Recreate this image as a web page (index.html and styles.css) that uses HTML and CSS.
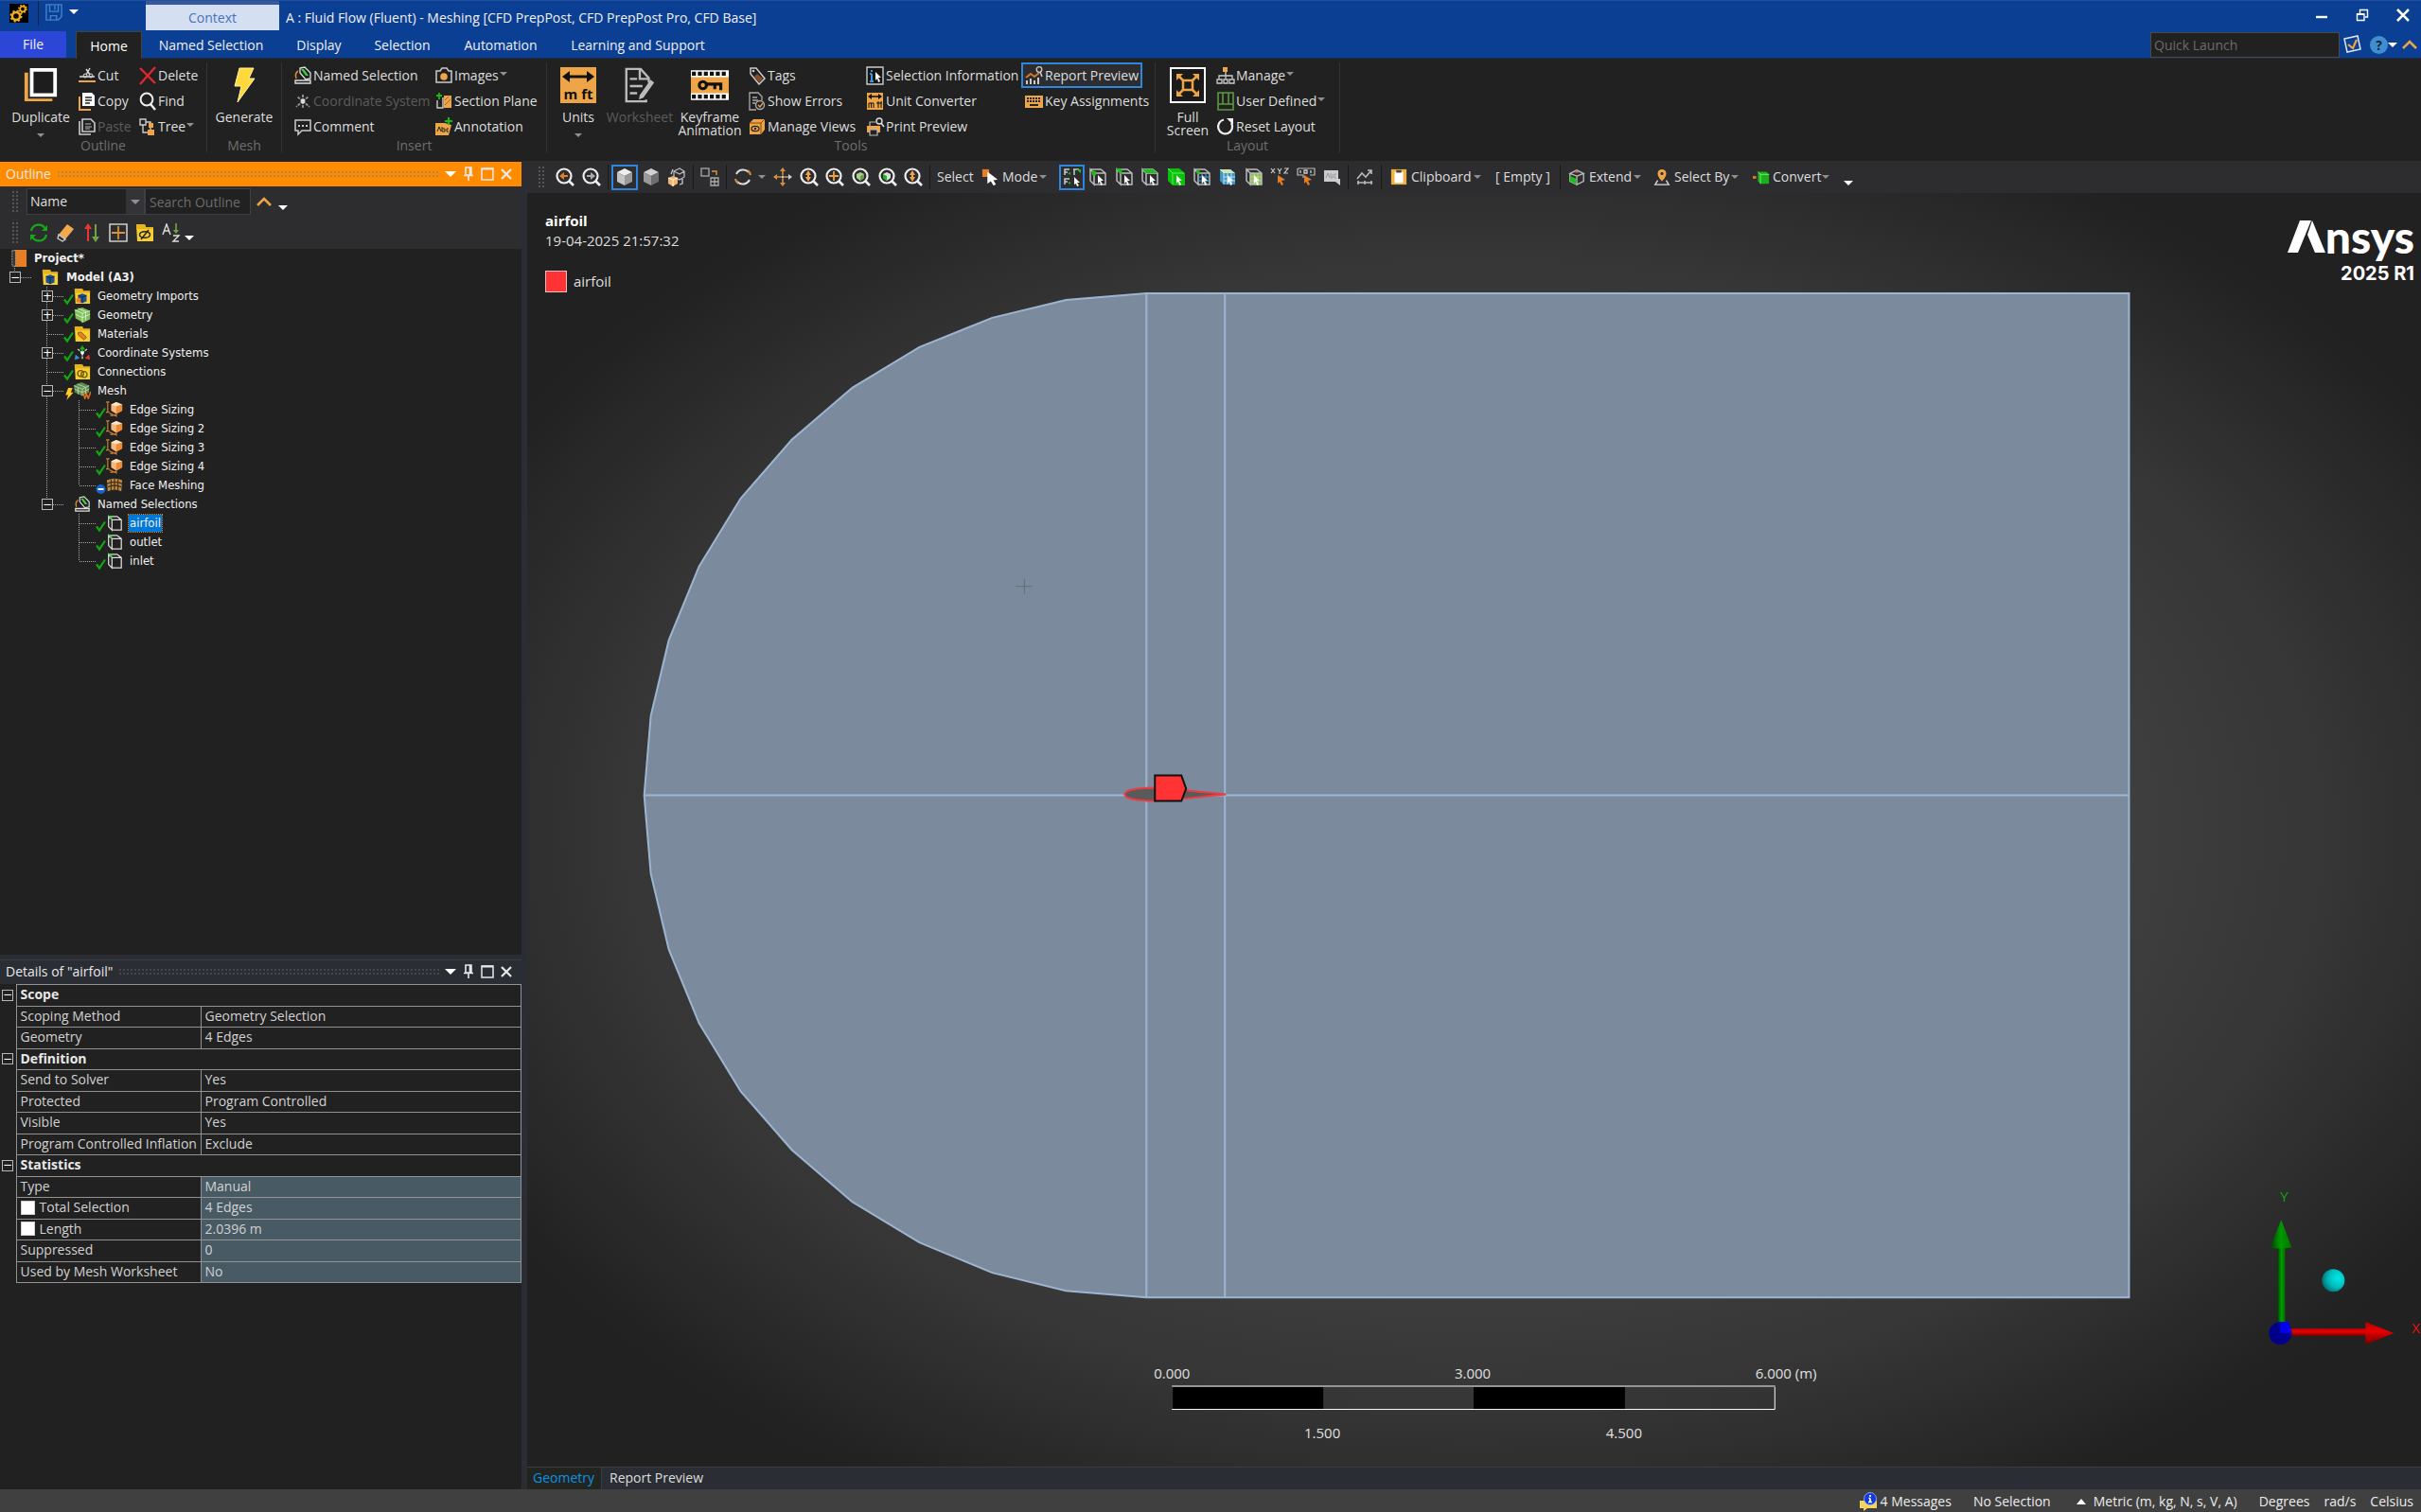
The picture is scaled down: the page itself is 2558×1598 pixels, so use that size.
FILE: index.html
```html
<!DOCTYPE html>
<html lang="en">
<head>
<meta charset="utf-8">
<title>A : Fluid Flow (Fluent) - Meshing</title>
<link rel="stylesheet" href="styles.css">
</head>
<body>
<svg class="sprite" aria-hidden="true">
  <defs>
    <linearGradient id="gTop" x1="0" y1="0" x2="1" y2="0"><stop offset="0" stop-color="#013d01"/><stop offset=".5" stop-color="#009a00"/><stop offset="1" stop-color="#007200"/></linearGradient>
    <linearGradient id="gRed" x1="0" y1="0" x2="0" y2="1"><stop offset="0" stop-color="#b00000"/><stop offset=".4" stop-color="#e80000"/><stop offset="1" stop-color="#700000"/></linearGradient>
    <radialGradient id="gCyan" cx=".7" cy=".4" r=".8"><stop offset="0" stop-color="#00e8e8"/><stop offset=".5" stop-color="#00bcbc"/><stop offset="1" stop-color="#005c5c"/></radialGradient>
  </defs>
  <symbol id="gears" viewBox="0 0 20 20"><path fill="#000" d="M0 0h20v20H0z"/><circle cx="7" cy="13" r="4" fill="none" stroke="#f2b01e" stroke-width="2.4"/><circle cx="7" cy="13" r="5.6" fill="none" stroke="#f2b01e" stroke-width="1.8" stroke-dasharray="2.2 2.2"/><circle cx="14" cy="5.5" r="2.8" fill="none" stroke="#f2b01e" stroke-width="1.8"/><circle cx="14" cy="5.5" r="4.2" fill="none" stroke="#f2b01e" stroke-width="1.4" stroke-dasharray="1.6 1.7"/></symbol>
  <symbol id="save" viewBox="0 0 20 20"><path d="M1 1h18v14l-4 4H1zM5 1v8h10V1M6 19v-5h7v5M11 2v5" fill="none" stroke="#3f83cc" stroke-width="1.6"/></symbol>
  <symbol id="duplicate" viewBox="0 0 40 40"><path d="M2 6v32h31v-3H6V6z" fill="#eda547"/><path d="M10 3h26v28H10z" fill="#1d1d1d" stroke="#fff" stroke-width="4"/></symbol>
  <symbol id="cut" viewBox="0 0 20 20"><path d="M2 11h16" stroke="#ddd" stroke-width="1.5"/><path d="M1 15h18v2H1z" fill="#eda547"/><path d="M9 9l4-7M13 9 9 3" stroke="#ddd" stroke-width="1.4"/><circle cx="8" cy="10" r="2" fill="none" stroke="#ddd"/><circle cx="14" cy="10" r="2" fill="none" stroke="#ddd"/></symbol>
  <symbol id="copy" viewBox="0 0 20 20"><path d="M2 5v14h12" fill="none" stroke="#eda547" stroke-width="2"/><path d="M5 1h10l3 3v11H5z" fill="#fff"/><path d="M8 6h7M8 9h7M8 12h5" stroke="#222" stroke-width="1.3"/></symbol>
  <symbol id="paste" viewBox="0 0 20 20"><path d="M2 4v14h12M5 2h9l4 4v9H5z" fill="none" stroke="#ccc" stroke-width="1.6"/><path d="M8 7h6M8 10h7M8 12h5" stroke="#bbb" stroke-width="1.2"/></symbol>
  <symbol id="delete" viewBox="0 0 20 20"><path d="M2 2 18 18M18 1 2 19" stroke="#e0282c" stroke-width="2.4"/></symbol>
  <symbol id="find" viewBox="0 0 20 20"><circle cx="9" cy="8" r="6.4" fill="none" stroke="#eee" stroke-width="2"/><path d="m13 13 5 6" stroke="#eee" stroke-width="2.4"/></symbol>
  <symbol id="treeic" viewBox="0 0 20 20"><path d="M2 2h6v6H2zM5 8v8h5M8 5h5v8" fill="none" stroke="#ccc" stroke-width="1.4"/><path d="M11 6h5v5h-5zM10 13h7v6h-7z" fill="#eda547"/></symbol>
  <symbol id="generate" viewBox="0 0 24 38"><path d="M7 1h15l-5 11h6L5 37l4-17H2z" fill="#ffd83a" stroke="#fff3b0"/></symbol>
  <symbol id="namedsel" viewBox="0 0 20 20"><path d="M2 15h16v3H2z" fill="#222" stroke="#ddd" stroke-width="1.4"/><path d="m7 2 5-1 6 6v6l-5 1-6-7z" fill="#222" stroke="#ddd" stroke-width="1.3"/><path d="m8 3 3 0 5 7h-3z" fill="#3ccf3c"/><path d="M5 5c-3 2-3 5-2 8" fill="none" stroke="#e58a2a" stroke-width="1.6"/></symbol>
  <symbol id="coordsys" viewBox="0 0 20 20"><path d="M10 10V2M10 10l-7 6M10 10l7 6M10 10 4 5M10 10l6-5M10 10v8" stroke="#8d8d8d" stroke-width="2" stroke-dasharray="3 1"/><circle cx="10" cy="10" r="2.4" fill="#ddd"/></symbol>
  <symbol id="coordcol" viewBox="0 0 20 20"><path d="M10 10 4 5M10 10l6-5M10 10v7" stroke="#ccc" stroke-width="1.6" stroke-dasharray="3 1"/><path d="M10 1 6.500 6h7z" fill="#13b013"/><path d="M10 5v4" stroke="#13b013" stroke-width="2"/><path d="m1 18 1-6 5 4z" fill="#3d8fdc"/><path d="m19 18-1-6-5 4z" fill="#e33"/><circle cx="10" cy="10" r="2" fill="#fff"/></symbol>
  <symbol id="comment" viewBox="0 0 20 20"><path d="M2 3h16v11H9l-4 4v-4H2z" fill="none" stroke="#ccc" stroke-width="1.5"/><path d="M5 8h2v2H5zM9 8h2v2H9zM13 8h2v2h-2z" fill="#ccc"/></symbol>
  <symbol id="camera" viewBox="0 0 20 20"><path d="M2 5h4l2-3h5l2 3h3v12H2z" fill="none" stroke="#ccc" stroke-width="1.5"/><circle cx="10" cy="11" r="3.8" fill="#eda547"/></symbol>
  <symbol id="section" viewBox="0 0 20 20"><path d="M5 1v7M2 4h6" stroke="#18b918" stroke-width="1.8"/><path d="M3 9v8h6V6" fill="none" stroke="#ccc" stroke-width="1.4"/><path d="M10 4h8v13h-8z" fill="#eda547"/><path d="m11 14 6-6M11 9l4-4" stroke="#9d651b"/></symbol>
  <symbol id="annot" viewBox="0 0 20 20"><path d="M1 6h10l7 2-3 11H1z" fill="#eda547"/><path d="M15 0v8M11 4h8" stroke="#18b918" stroke-width="2"/><path d="M3 15l2-5 2 5M8 10v5h3v-3H8M15 12h-2v3h2" fill="none" stroke="#222"/></symbol>
  <symbol id="units" viewBox="0 0 38 38"><path d="M0 0h38v38H0z" fill="#eda547"/><path d="M6 10h26" stroke="#111" stroke-width="3"/><path d="m2 10 8-6v12zM36 10l-8-6v12z" fill="#111"/></symbol>
  <symbol id="worksheet" viewBox="0 0 38 40"><path d="M26 36v2H4V2h16l9 10v5" fill="none" stroke="#bbb" stroke-width="2.500"/><path d="M19 2v11h10M8 13h8M8 21h14M8 29h8" fill="none" stroke="#bbb" stroke-width="2.500"/><path d="m19 31 12-17 4 3-12 17-5 2z" fill="#bbb"/></symbol>
  <symbol id="keyframe" viewBox="0 0 38 30"><path d="M0 0h38v30H0z" fill="#fff"/><path d="M0 7h38v16H0z" fill="#eda547"/><path d="M1 3.500h36M1 26.500h36" stroke="#111" stroke-width="4" stroke-dasharray="4 2"/><circle cx="12" cy="15" r="3.600" fill="none" stroke="#111" stroke-width="3"/><path d="M15 14h15v6M24 14v5" fill="none" stroke="#111" stroke-width="3"/></symbol>
  <symbol id="tag" viewBox="0 0 20 20"><path d="m3 2 6 0 9 11-6 6L3 8z" fill="none" stroke="#ccc" stroke-width="1.500"/><path d="m10 8 6 5-4 4-5-6z" fill="#8b4d22"/><circle cx="6" cy="5" r="1.300" fill="#ccc"/></symbol>
  <symbol id="errors" viewBox="0 0 20 20"><path d="M9 19H2V1h9l4 4v4M5 6h5M5 9h6M5 12h3" fill="none" stroke="#aaa" stroke-width="1.300"/><circle cx="13" cy="14" r="4.500" fill="#222" stroke="#aaa" stroke-width="1.400"/><path d="m11 14 2 2 3-4" fill="none" stroke="#eda547" stroke-width="1.300"/></symbol>
  <symbol id="views" viewBox="0 0 20 20"><path d="m2 6 4-4h12v11l-4 5H2z" fill="#eda547"/><path d="M2 6h12v12M14 6l4-4" fill="none" stroke="#7a4a10"/><ellipse cx="8" cy="12" rx="4" ry="2.600" fill="none" stroke="#222" stroke-width="1.200"/><circle cx="8" cy="12" r="1.200" fill="#222"/></symbol>
  <symbol id="selinfo" viewBox="0 0 20 20"><path d="M1 1h17v18H1z" fill="#161616" stroke="#ccc" stroke-width="1.400"/><path d="M6 4v2M6 8v8M4 8h2M4 16h4" stroke="#3b97e6" stroke-width="2"/><path d="m10 6 6 6-3 0 2 4-2 1-1-4-2 2z" fill="#fff"/></symbol>
  <symbol id="conv" viewBox="0 0 20 20"><path d="M1 1h17v18H1z" fill="#eda547"/><path d="M4 5h12" stroke="#111" stroke-width="1.600"/><path d="m2 5 4-3v6zM17 5l-4-3v6z" fill="#111"/><path d="M3 17v-5h5v5M5.500 12v5M13 17v-7M16 17v-7M11 12h6" fill="none" stroke="#111"/></symbol>
  <symbol id="print" viewBox="0 0 20 20"><path d="M1 9h14v7H1z" fill="#eda547"/><path d="M4 9V5h6M4 13h8v6H4z" fill="#222" stroke="#bbb" stroke-width="1.200"/><circle cx="14" cy="4" r="3" fill="none" stroke="#ddd" stroke-width="1.400"/><path d="m16 6 3 4" stroke="#ddd" stroke-width="1.500"/></symbol>
  <symbol id="report" viewBox="0 0 20 20"><path d="M2 19v-4M6 19v-6M10 19v-4M14 19v-7" stroke="#ccc" stroke-width="2"/><path d="m1 12 5-4 4 3 5-4" fill="none" stroke="#d07a2c" stroke-width="2"/><circle cx="15" cy="3.500" r="2.800" fill="none" stroke="#ccc" stroke-width="1.300"/><path d="m16 6 2 5" stroke="#ccc" stroke-width="1.500"/></symbol>
  <symbol id="keys" viewBox="0 0 20 20"><path d="M0 4h19v13H0z" fill="#eda547"/><path d="M2 7h15M2 10h15" stroke="#222" stroke-width="2" stroke-dasharray="2 1"/><path d="M5 14h9" stroke="#222" stroke-width="2"/></symbol>
  <symbol id="full" viewBox="0 0 38 38"><path d="M1 1h36v36H1z" fill="#1a1a1a" stroke="#fff" stroke-width="2"/><path d="M14 14h10v10H14z" fill="none" stroke="#eda547" stroke-width="2.500"/><path d="m8 8 7 7M30 8l-7 7M8 30l7-7M30 30l-7-7" stroke="#eda547" stroke-width="2.500"/><path d="M7 7h7l-7 7zM31 7v7l-7-7zM7 31v-7l7 7zM31 31h-7l7-7z" fill="#eda547"/></symbol>
  <symbol id="manage" viewBox="0 0 20 20"><path d="M7 1h5v5H7z" fill="#eda547"/><path d="M10 6v7M3 13v-3h14v3M1 14h5v4H1zM8 14h4v4H8zM14 14h5v4h-5z" fill="none" stroke="#ccc" stroke-width="1.300"/></symbol>
  <symbol id="userdef" viewBox="0 0 20 20"><path d="M2 1h16v18H2zM7 1v12M13 1v12M2 13h16" fill="none" stroke="#5d9a3c" stroke-width="1.600"/></symbol>
  <symbol id="reset" viewBox="0 0 20 20"><path d="M8 2.500A7.500 7.500 0 1 0 16 6" fill="none" stroke="#eee" stroke-width="2.200"/><path d="M11 1h7v7z" fill="#eee"/></symbol>
  <symbol id="lens" viewBox="0 0 20 20"><circle cx="9" cy="9" r="7.500" fill="none" stroke="#eee" stroke-width="2.200"/><path d="m14 14 5 5" stroke="#eee" stroke-width="2.600"/></symbol>
  <symbol id="zback" viewBox="0 0 20 20"><use href="#lens"/><path d="M4 9 9 5v3h4v2H9v3z" fill="#e57e25"/></symbol>
  <symbol id="zfwd" viewBox="0 0 20 20"><use href="#lens"/><path d="M14 9 9 5v3H5v2h4v3z" fill="#aaa"/></symbol>
  <symbol id="zud" viewBox="0 0 20 20"><use href="#lens"/><path d="m9 3 3 5H6zM9 15l3-5H6z" fill="#eda547"/><path d="M9 7v4" stroke="#eda547" stroke-width="2"/></symbol>
  <symbol id="zplus" viewBox="0 0 20 20"><use href="#lens"/><path d="M9 4v10M4 9h10" stroke="#eda547" stroke-width="1.800"/></symbol>
  <symbol id="zcube" viewBox="0 0 20 20"><use href="#lens"/><path d="m5 7 4-2 4 2v4l-4 3-4-3z" fill="#a7d08c"/><path d="M9 9v5l4-3V7z" fill="#6a9b50"/></symbol>
  <symbol id="zgreen" viewBox="0 0 20 20"><use href="#lens"/><path d="m5 7 4-2 4 2v4l-4 3-4-3z" fill="#ddd"/><path d="M5 7l4 2v5l-4-3z" fill="#10c010"/></symbol>
  <symbol id="cubel" viewBox="0 0 20 20"><path d="m2 5 8-4 8 4-8 4z" fill="#eee"/><path d="M2 5l8 4v10l-8-4z" fill="#c4c4c4"/><path d="M18 5l-8 4v10l8-4z" fill="#999"/></symbol>
  <symbol id="cubed" viewBox="0 0 20 20"><path d="m2 5 8-4 8 4-8 4z" fill="#d0d0d0"/><path d="M2 5l8 4v10l-8-4z" fill="#9a9a9a"/><path d="M18 5l-8 4v10l8-4z" fill="#6e6e6e"/></symbol>
  <symbol id="multi" viewBox="0 0 20 20"><path d="m7 4 6-3 5 3v6l-5 3-6-3zM7 4l6 3 5-3" fill="none" stroke="#bbb" stroke-width="1.300"/><path d="m1 11 5-2 5 2v6l-5 3-5-3z" fill="#f6b26b"/><path d="m1 11 5 2v7M6 13l5-2" fill="none" stroke="#fff"/><path d="M16 12v5l-3 1M4 7 6 2" fill="none" stroke="#ccc" stroke-width="1.300"/></symbol>
  <symbol id="grid" viewBox="0 0 20 20"><path d="M1 1h8v8H1z" fill="none" stroke="#999" stroke-width="1.500"/><path d="M12 4h5v4" fill="none" stroke="#d8923e" stroke-width="1.500"/><path d="M11 11h8v8h-8zM15 11v8M11 15h8" fill="none" stroke="#aaa" stroke-width="1.300"/></symbol>
  <symbol id="rotate" viewBox="0 0 20 20"><path d="M3 7a8 8 0 0 1 13-2M17 13a8 8 0 0 1-13 2" fill="none" stroke="#ddd" stroke-width="2"/><path d="M2 12a8 8 0 0 0 3 5M18 8a8 8 0 0 0-3-5" fill="none" stroke="#d8923e" stroke-width="2"/></symbol>
  <symbol id="pan" viewBox="0 0 20 20"><path d="M10 3v5M10 12v5M3 10h5M12 10h5" stroke="#d8923e" stroke-width="1.600"/><path d="m10 0 3 4H7zM10 20l3-4H7zM0 10l4-3v6z" fill="#d8923e"/><path d="m20 10-4-3v6z" fill="#ccc"/><circle cx="10" cy="10" r="1.600" fill="#ccc"/></symbol>
  <symbol id="modeic" viewBox="0 0 20 20"><path d="M1 1h8v9H1z" fill="#e57e25"/><path d="m7 4 12 9-5 1 3 5-3 1-3-5-4 3z" fill="#fff"/></symbol>
  <symbol id="quad" viewBox="0 0 20 20"><path d="M2 8V2h5M2 5h3M11 2h6M2 18v-6h5M2 15h3M12 8V2" fill="none" stroke="#ccc" stroke-width="1.500"/><path d="M5 6l3-1v3zM14 2h5v4zM5 16l3-1v3z" fill="#18c018"/><path d="m12 10 6 6-3 0 2 3-2 1-1-3-2 1z" fill="#fff"/></symbol>
  <symbol id="bx" viewBox="0 0 20 20"><path d="m2 2 4 4v12l-4-4zM2 2h11l5 4v12H6V6h12M2 2l4 4" fill="none" stroke="#bbb" stroke-width="1.500"/></symbol>
  <symbol id="cur" viewBox="0 0 20 20"><path d="m10 8 6 6-3 0 2 4-2 1-1-4-2 2z" fill="#fff"/></symbol>
  <symbol id="selv" viewBox="0 0 20 20"><use href="#bx"/><circle cx="6" cy="6" r="2.500" fill="#18c018"/><use href="#cur"/></symbol>
  <symbol id="sele" viewBox="0 0 20 20"><use href="#bx"/><path d="m1 1 6 1v5z" fill="#18c018" stroke="#18c018"/><use href="#cur"/></symbol>
  <symbol id="self" viewBox="0 0 20 20"><use href="#bx"/><path d="M2 2h11l5 4H6z" fill="#18c018"/><use href="#cur"/></symbol>
  <symbol id="selb" viewBox="0 0 20 20"><path d="m1 1 12 0 6 5v13H6l-5-5z" fill="#0bc00b"/><path d="M1 1l5 5v12M6 6h12" fill="none" stroke="#5df05d"/><use href="#cur"/></symbol>
  <symbol id="seln" viewBox="0 0 20 20"><use href="#bx"/><path d="M10 6v12M14 6v12M6 10h12M6 14h12" stroke="#4aa3df"/><circle cx="6" cy="5" r="2" fill="#18c018"/><use href="#cur"/></symbol>
  <symbol id="selnf" viewBox="0 0 20 20"><path d="M2 2h11l5 4v12H6l-4-4z" fill="#3c96c8"/><path d="M2 2h11l5 4H6z" fill="#cfe6b0"/><path d="M10 6v12M14 6v12M6 10h12M6 14h12M2 2l4 4v12" fill="none" stroke="#bfe0f0"/><use href="#cur"/></symbol>
  <symbol id="seleb" viewBox="0 0 20 20"><path d="M6 6h12v12H6z" fill="#8cc152"/><use href="#bx"/><path d="M10 6v12M14 6v12M6 10h12M6 14h12" stroke="#cfe6b0" stroke-width=".6"/><use href="#cur"/></symbol>
  <symbol id="ptr" viewBox="0 0 20 20"><path d="m8 8 8 5-4 1 2 4-2 1-2-4-2 2z" fill="#e57e25"/></symbol>
  <symbol id="xyz" viewBox="0 0 20 20"><path d="m1 1 4 5M5 1 1 6M8 1l2 3 2-3M10 4v3M15 1h4l-4 5h4" fill="none" stroke="#ccc" stroke-width="1.200"/><use href="#ptr"/></symbol>
  <symbol id="probe" viewBox="0 0 20 20"><path d="M1 1h18v7h-5M1 1v7h6v3" fill="none" stroke="#bbb" stroke-width="1.200"/><path d="M4 3v3M8 3h3v3H8zM15 3v3" fill="none" stroke="#ccc" stroke-width="1.300"/><use href="#ptr"/></symbol>
  <symbol id="note" viewBox="0 0 20 20"><path d="M2 3h15v9h2v7l-5-4H2z" fill="#ccc"/><path d="m4 11 2-5 2 5M9 6v5h2V7M15 7h-2v4h2" fill="none" stroke="#999"/></symbol>
  <symbol id="chart" viewBox="0 0 20 20"><path d="m2 12 5-6 4 4 6-7M13 3h4v4" fill="none" stroke="#bbb" stroke-width="1.600"/><path d="M2 16h16M3 14v4M10 14v4M17 14v4" stroke="#bbb" stroke-width="1.500"/></symbol>
  <symbol id="clip" viewBox="0 0 20 20"><path d="M1 1h18v18H1z" fill="#eeb244"/><path d="M5 4h10v13H5z" fill="#fff"/><path d="M7 2h6v3H7z" fill="#444"/></symbol>
  <symbol id="extend" viewBox="0 0 20 20"><path d="m10 9 8-3v9l-8 4zM2 6l8 3 8-3-8-4zM2 6v9l8 4" fill="none" stroke="#bbb" stroke-width="1.500"/><path d="M2 9l7 3v7l-7-4z" fill="#19c019"/><path d="m10 1 2 4H8z" fill="#d66"/></symbol>
  <symbol id="pin" viewBox="0 0 20 20"><path d="M10 1a5 5 0 0 1 5 5c0 4-5 9-5 9S5 10 5 6a5 5 0 0 1 5-5z" fill="#eda547"/><circle cx="10" cy="6" r="1.800" fill="#333"/><path d="M5 14l-3 5h16l-3-5" fill="none" stroke="#ddd" stroke-width="1.500"/></symbol>
  <symbol id="convert" viewBox="0 0 20 20"><path d="M0 9h4v3H0z" fill="#e57e25"/><path d="M6 4h10l3 3v11H9l-3-3z" fill="#19b019"/><path d="M6 4l3 3v11M9 7h10" fill="none" stroke="#8be88b"/></symbol>
  <symbol id="refresh" viewBox="0 0 20 20"><path d="M2 8a8 8 0 0 1 15-2M18 12a8 8 0 0 1-15 2" fill="none" stroke="#16a916" stroke-width="2.200"/><path d="M19 2v6h-6zM1 18v-6h6z" fill="#16a916"/></symbol>
  <symbol id="eraser" viewBox="0 0 20 20"><path d="m12 1 7 5-9 11-7-5z" fill="#f2a94c"/><path d="m3 12 7 5-3 2-5-3z" fill="none" stroke="#ccc" stroke-width="1.400"/></symbol>
  <symbol id="updown" viewBox="0 0 20 20"><path d="M6 19V4" stroke="#e33" stroke-width="2"/><path d="m6 0 4 6H2z" fill="#e33"/><path d="M14 1v15" stroke="#6da544" stroke-width="2"/><path d="m14 20 4-6h-8z" fill="#6da544"/></symbol>
  <symbol id="plusbox" viewBox="0 0 20 20"><path d="M1 1h18v18H1z" fill="none" stroke="#ccc" stroke-width="1.600"/><path d="M10 3v14M3 10h14" stroke="#d8923e" stroke-width="1.800"/></symbol>
  <symbol id="folder" viewBox="0 0 20 20"><path d="M1 1h9l1 3h8v15H2z" fill="#f9cf2e"/><path d="M1 1h9l1 3h8v2H1z" fill="#e8b21b"/></symbol>
  <symbol id="fhide" viewBox="0 0 20 20"><use href="#folder"/><ellipse cx="10" cy="12" rx="5.500" ry="3.300" fill="none" stroke="#222" stroke-width="1.500"/><path d="m6 17 8-10" stroke="#222" stroke-width="1.500"/></symbol>
  <symbol id="fmodel" viewBox="0 0 20 20"><use href="#folder"/><path d="m5 9 5-2 5 2v7l-5 2-5-2z" fill="#1d4f91"/><path d="m5 9 5 2 5-2M10 11v7" fill="none" stroke="#0a2347"/></symbol>
  <symbol id="fimp" viewBox="0 0 20 20"><use href="#fmodel"/><path d="m3 13 5-1v6l-5-1z" fill="#e57e25"/></symbol>
  <symbol id="fmat" viewBox="0 0 20 20"><use href="#folder"/><path d="m5 8 4 0 6 6-3 3-7-6z" fill="#e57e25" stroke="#8f5a12"/></symbol>
  <symbol id="fconn" viewBox="0 0 20 20"><use href="#folder"/><circle cx="8" cy="12" r="3.500" fill="none" stroke="#6e5a10" stroke-width="1.500"/><circle cx="12" cy="13" r="3.500" fill="none" stroke="#6e5a10" stroke-width="1.500"/></symbol>
  <symbol id="az" viewBox="0 0 20 20"><path d="m1 12 4-11 4 11M3 8h5M12 13h6l-6 6h6" fill="none" stroke="#ddd" stroke-width="1.400"/><path d="M15 0v8" stroke="#6da544" stroke-width="1.600"/><path d="m15 11 3-4h-6z" fill="#6da544"/></symbol>
  <symbol id="book" viewBox="0 0 20 20"><path d="M4 0h15v20H4z" fill="#e57e25"/><path d="M2 1h4v18H2z" fill="#333" stroke="#aaa" stroke-dasharray="2 1"/></symbol>
  <symbol id="geom" viewBox="0 0 20 20"><path d="m1 4 9-3 9 4v10l-8 4-9-5z" fill="#7fbf5a"/><path d="m1 4 9 4 9-3M10 8v11M5 2l9 4v10M2 9l8 4 9-4" fill="none" stroke="#dff2d0"/></symbol>
  <symbol id="mesh" viewBox="0 0 20 20"><path d="m0 4 9-4 9 4v8l-8 4-9-4z" fill="#5d8d50"/><path d="m0 4 10 4 8-4M10 8v8M4 2l10 4v8M1 8l9 4 8-4M5 6v8" fill="none" stroke="#bcd7ae"/><path d="m11 12 2 7 2-5 2 5 3-8" fill="none" stroke="#e06a1c" stroke-width="1.800"/></symbol>
  <symbol id="sizing" viewBox="0 0 20 20"><path d="m6 4 6-3 7 3v7l-7 4-6-4z" fill="#f9b878"/><path d="m6 4 6 2 7-2-7-3z" fill="#fde6cc"/><path d="M12 6v9l7-4V4z" fill="#ee8c35"/><path d="M2 1v12M0 1h4M0 13h4M4 14l9 4M5 17l8-1" stroke="#c87f35" stroke-width="1.300"/></symbol>
  <symbol id="facem" viewBox="0 0 20 20"><path d="M1 4q9-4 18 0l-1 13q-8-4-16 0z" fill="#b98a4c"/><path d="M1 8q9-4 18 0M2 12q8-4 16 0M6 3v13M10 2v13M14 3v13" fill="none" stroke="#4a3110" stroke-width="1.400"/></symbol>
  <symbol id="selbox" viewBox="0 0 20 20"><path d="m3 2 4 4v12l-4-4zM3 2h10l5 4v12H7V6h11" fill="none" stroke="#ddd" stroke-width="1.400"/><path d="m2 1 5 1v4z" fill="#2fd62f"/></symbol>
  <symbol id="check" viewBox="0 0 11 12"><path d="m1 6 3 4 6-9" fill="none" stroke="#12a812" stroke-width="2.200"/></symbol>
  <symbol id="bolt" viewBox="0 0 11 14"><path d="M5 0h5L8 5h3L3 14l2-6H2z" fill="#ffc928"/></symbol>
  <symbol id="minusc" viewBox="0 0 11 12"><circle cx="5.500" cy="6.500" r="5" fill="#1464c8"/><path d="M2.500 6.500h6" stroke="#fff" stroke-width="2"/></symbol>
  <symbol id="hpin" viewBox="0 0 14 16"><path d="M4 1h6v8H4zM8.500 1v8M2 9.500h10M7 10v5" fill="none" stroke="currentColor" stroke-width="1.600"/></symbol>
  <symbol id="hmax" viewBox="0 0 14 16"><path d="M1 2h12v12H1z" fill="none" stroke="currentColor" stroke-width="1.500"/><path d="M1 2.500h12" stroke="currentColor" stroke-width="2"/></symbol>
  <symbol id="hx" viewBox="0 0 14 16"><path d="m2 3 10 10M12 3 2 13" stroke="currentColor" stroke-width="2.200"/></symbol>
  <symbol id="up" viewBox="0 0 18 12"><path d="m2 10 7-7 7 7" fill="none" stroke="#eda547" stroke-width="2.600"/></symbol>
  <symbol id="wmin" viewBox="0 0 14 14"><path d="M1 9h12" stroke="#fff" stroke-width="2.400"/></symbol>
  <symbol id="wres" viewBox="0 0 14 14"><path d="M1.500 6h7.500v6.500H1.500zM4.500 5V1.500h8V9H10" fill="none" stroke="#fff" stroke-width="1.400"/><path d="M1 6h8" stroke="#fff" stroke-width="2"/></symbol>
  <symbol id="wx" viewBox="0 0 14 14"><path d="m1 1 12 12M13 1 1 13" stroke="#fff" stroke-width="2.600"/></symbol>
  <symbol id="tick" viewBox="0 0 20 20"><path d="m1 4 14-3 3 14-14 3z" fill="none" stroke="#dce6f5" stroke-width="1.500"/><path d="m5 10 5 4 4-9" fill="none" stroke="#eda547" stroke-width="2.200"/></symbol>
  <symbol id="msg" viewBox="0 0 20 20"><path d="M0 9h18v8H8l-4 3v-3H0z" fill="#f4d35e"/><circle cx="11" cy="7" r="6.500" fill="#1238e0" stroke="#9db4ff" stroke-width=".8"/><path d="M11 3v2M11 6.500v4M9 10.500h4M9.500 6.500H11" stroke="#fff" stroke-width="1.700"/></symbol>
</svg>

<header class="titlebar">
  <div class="quick-access">
    <svg class="i20"><use href="#gears"/></svg><span class="qa-sep"></span>
    <button class="plain" aria-label="Save"><svg class="i18"><use href="#save"/></svg></button>
    <button class="plain qa-more" aria-label="Customize"><span class="caret white"></span></button>
  </div>
  <div class="context-tab">Context</div>
  <h1 class="app-title">A : Fluid Flow (Fluent) - Meshing [CFD PrepPost, CFD PrepPost Pro, CFD Base]</h1>
  <div class="window-buttons">
    <button class="plain" aria-label="Minimize"><svg class="i14"><use href="#wmin"/></svg></button>
    <button class="plain" aria-label="Restore"><svg class="i14"><use href="#wres"/></svg></button>
    <button class="plain" aria-label="Close"><svg class="i14"><use href="#wx"/></svg></button>
  </div>
</header>

<nav class="tabbar">
  <button class="tab file">File</button>
  <button class="tab home">Home</button>
  <button class="tab t-ns">Named Selection</button>
  <button class="tab t-di">Display</button>
  <button class="tab t-se">Selection</button>
  <button class="tab t-au">Automation</button>
  <button class="tab t-le">Learning and Support</button>
  <div class="tab-tools">
    <input class="quick-launch" type="text" placeholder="Quick Launch" aria-label="Quick Launch">
    <button class="plain" aria-label="Tasks"><svg class="i20"><use href="#tick"/></svg></button>
    <button class="plain help" aria-label="Help"><span class="help-dot">?</span><span class="caret white"></span></button>
    <button class="plain" aria-label="Collapse ribbon"><svg class="i18x12"><use href="#up"/></svg></button>
  </div>
</nav>

<section class="ribbon">
  <div class="group g-outline">
    <div class="group-body">
      <button class="big"><svg class="i40"><use href="#duplicate"/></svg><span>Duplicate</span><span class="caret"></span></button>
      <div class="stack">
        <button class="small"><svg class="i20"><use href="#cut"/></svg>Cut</button>
        <button class="small"><svg class="i20"><use href="#copy"/></svg>Copy</button>
        <button class="small off"><svg class="i20"><use href="#paste"/></svg>Paste</button>
      </div>
      <div class="stack">
        <button class="small"><svg class="i20"><use href="#delete"/></svg>Delete</button>
        <button class="small"><svg class="i20"><use href="#find"/></svg>Find</button>
        <button class="small"><svg class="i20"><use href="#treeic"/></svg>Tree<span class="caret"></span></button>
      </div>
    </div>
    <div class="group-label">Outline</div>
  </div>
  <div class="group g-mesh">
    <div class="group-body">
      <button class="big"><svg class="i40"><use href="#generate"/></svg><span>Generate</span></button>
    </div>
    <div class="group-label">Mesh</div>
  </div>
  <div class="group g-insert">
    <div class="group-body">
      <div class="stack">
        <button class="small"><svg class="i20"><use href="#namedsel"/></svg>Named Selection</button>
        <button class="small off"><svg class="i20"><use href="#coordsys"/></svg>Coordinate System</button>
        <button class="small"><svg class="i20"><use href="#comment"/></svg>Comment</button>
      </div>
      <div class="stack">
        <button class="small"><svg class="i20"><use href="#camera"/></svg>Images<span class="caret"></span></button>
        <button class="small"><svg class="i20"><use href="#section"/></svg>Section Plane</button>
        <button class="small"><svg class="i20"><use href="#annot"/></svg>Annotation</button>
      </div>
    </div>
    <div class="group-label">Insert</div>
  </div>
  <div class="group g-tools">
    <div class="group-body">
      <button class="big"><span class="units-icon"><svg class="i40"><use href="#units"/></svg><span class="units-text">m ft</span></span><span>Units</span><span class="caret"></span></button>
      <button class="big off"><svg class="i40"><use href="#worksheet"/></svg><span>Worksheet</span></button>
      <button class="big keyframe"><svg class="i40"><use href="#keyframe"/></svg><span>Keyframe<br>Animation</span></button>
      <div class="stack">
        <button class="small"><svg class="i20"><use href="#tag"/></svg>Tags</button>
        <button class="small"><svg class="i20"><use href="#errors"/></svg>Show Errors</button>
        <button class="small"><svg class="i20"><use href="#views"/></svg>Manage Views</button>
      </div>
      <div class="stack">
        <button class="small"><svg class="i20"><use href="#selinfo"/></svg>Selection Information</button>
        <button class="small"><svg class="i20"><use href="#conv"/></svg>Unit Converter</button>
        <button class="small"><svg class="i20"><use href="#print"/></svg>Print Preview</button>
      </div>
      <div class="stack">
        <button class="small on"><svg class="i20"><use href="#report"/></svg>Report Preview</button>
        <button class="small"><svg class="i20"><use href="#keys"/></svg>Key Assignments</button>
      </div>
    </div>
    <div class="group-label">Tools</div>
  </div>
  <div class="group g-layout">
    <div class="group-body">
      <button class="big"><svg class="i40"><use href="#full"/></svg><span>Full<br>Screen</span></button>
      <div class="stack">
        <button class="small"><svg class="i20"><use href="#manage"/></svg>Manage<span class="caret"></span></button>
        <button class="small"><svg class="i20"><use href="#userdef"/></svg>User Defined<span class="caret"></span></button>
        <button class="small"><svg class="i20"><use href="#reset"/></svg>Reset Layout</button>
      </div>
    </div>
    <div class="group-label">Layout</div>
  </div>
</section>

<main class="workspace">
  <aside class="sidebar">
    <section class="outline">
      <header class="panel-head active"><h2>Outline</h2><span class="grip-h"></span>
        <button class="plain" aria-label="Menu"><span class="caret big-caret"></span></button>
        <button class="plain" aria-label="Pin"><svg class="i14x16"><use href="#hpin"/></svg></button>
        <button class="plain" aria-label="Maximize"><svg class="i14x16"><use href="#hmax"/></svg></button>
        <button class="plain" aria-label="Close"><svg class="i14x16"><use href="#hx"/></svg></button>
      </header>
      <div class="outline-tools">
        <div class="tool-row filter-row"><span class="grip-v"></span>
          <span class="select-wrap"><select aria-label="Filter by"><option>Name</option></select><span class="caret"></span></span>
          <input class="search" type="text" placeholder="Search Outline" aria-label="Search Outline">
          <button class="plain" aria-label="Previous"><svg class="i18x12"><use href="#up"/></svg></button>
          <span class="caret white low"></span>
        </div>
        <div class="tool-row icon-row"><span class="grip-v"></span>
          <button class="plain" aria-label="Refresh"><svg class="i20"><use href="#refresh"/></svg></button>
          <button class="plain" aria-label="Clear"><svg class="i20"><use href="#eraser"/></svg></button>
          <button class="plain" aria-label="Sort"><svg class="i20"><use href="#updown"/></svg></button>
          <button class="plain" aria-label="Expand"><svg class="i20"><use href="#plusbox"/></svg></button>
          <button class="plain" aria-label="Hide folders"><svg class="i20"><use href="#fhide"/></svg></button>
          <button class="plain" aria-label="Alphabetical"><svg class="i20"><use href="#az"/></svg></button>
          <span class="caret white low"></span>
        </div>
      </div>
      <ul class="tree">
        <li class="row root"><svg class="i18"><use href="#book"/></svg><span class="name">Project*</span></li>
        <li class="row l1"><span class="branch last"><button class="exp" aria-label="Collapse">−</button></span><svg class="i18"><use href="#fmodel"/></svg><span class="name">Model (A3)</span></li>
        <li class="row l2"><span class="branch"><button class="exp" aria-label="Expand">+</button></span><svg class="state"><use href="#check"/></svg><svg class="i18"><use href="#fimp"/></svg><span class="name">Geometry Imports</span></li>
        <li class="row l2"><span class="branch"><button class="exp" aria-label="Expand">+</button></span><svg class="state"><use href="#check"/></svg><svg class="i18"><use href="#geom"/></svg><span class="name">Geometry</span></li>
        <li class="row l2"><span class="branch"></span><svg class="state"><use href="#check"/></svg><svg class="i18"><use href="#fmat"/></svg><span class="name">Materials</span></li>
        <li class="row l2"><span class="branch"><button class="exp" aria-label="Expand">+</button></span><svg class="state"><use href="#check"/></svg><svg class="i18"><use href="#coordcol"/></svg><span class="name">Coordinate Systems</span></li>
        <li class="row l2"><span class="branch"></span><svg class="state"><use href="#check"/></svg><svg class="i18"><use href="#fconn"/></svg><span class="name">Connections</span></li>
        <li class="row l2"><span class="branch"><button class="exp" aria-label="Collapse">−</button></span><svg class="state"><use href="#bolt"/></svg><svg class="i18"><use href="#mesh"/></svg><span class="name">Mesh</span></li>
        <li class="row l3"><span class="guide"></span><span class="branch"></span><svg class="state"><use href="#check"/></svg><svg class="i18"><use href="#sizing"/></svg><span class="name">Edge Sizing</span></li>
        <li class="row l3"><span class="guide"></span><span class="branch"></span><svg class="state"><use href="#check"/></svg><svg class="i18"><use href="#sizing"/></svg><span class="name">Edge Sizing 2</span></li>
        <li class="row l3"><span class="guide"></span><span class="branch"></span><svg class="state"><use href="#check"/></svg><svg class="i18"><use href="#sizing"/></svg><span class="name">Edge Sizing 3</span></li>
        <li class="row l3"><span class="guide"></span><span class="branch"></span><svg class="state"><use href="#check"/></svg><svg class="i18"><use href="#sizing"/></svg><span class="name">Edge Sizing 4</span></li>
        <li class="row l3"><span class="guide"></span><span class="branch last"></span><svg class="state"><use href="#minusc"/></svg><svg class="i18"><use href="#facem"/></svg><span class="name">Face Meshing</span></li>
        <li class="row l2"><span class="branch last"><button class="exp" aria-label="Collapse">−</button></span><span class="state"></span><svg class="i18"><use href="#namedsel"/></svg><span class="name">Named Selections</span></li>
        <li class="row l3"><span class="guide none"></span><span class="branch"></span><svg class="state"><use href="#check"/></svg><svg class="i18"><use href="#selbox"/></svg><span class="name selected">airfoil</span></li>
        <li class="row l3"><span class="guide none"></span><span class="branch"></span><svg class="state"><use href="#check"/></svg><svg class="i18"><use href="#selbox"/></svg><span class="name">outlet</span></li>
        <li class="row l3"><span class="guide none"></span><span class="branch last"></span><svg class="state"><use href="#check"/></svg><svg class="i18"><use href="#selbox"/></svg><span class="name">inlet</span></li>
      </ul>
    </section>

    <section class="details">
      <header class="panel-head"><h2>Details of "airfoil"</h2><span class="grip-h"></span>
        <button class="plain" aria-label="Menu"><span class="caret big-caret"></span></button>
        <button class="plain" aria-label="Pin"><svg class="i14x16"><use href="#hpin"/></svg></button>
        <button class="plain" aria-label="Maximize"><svg class="i14x16"><use href="#hmax"/></svg></button>
        <button class="plain" aria-label="Close"><svg class="i14x16"><use href="#hx"/></svg></button>
      </header>
      <table class="props">
        <colgroup><col class="c-exp"><col class="c-key"><col></colgroup>
        <tbody>
          <tr><td class="gut"><button class="exp" aria-label="Collapse Scope">−</button></td><th colspan="2">Scope</th></tr>
          <tr><td class="gut"></td><td>Scoping Method</td><td>Geometry Selection</td></tr>
          <tr><td class="gut"></td><td>Geometry</td><td>4 Edges</td></tr>
          <tr><td class="gut"><button class="exp" aria-label="Collapse Definition">−</button></td><th colspan="2">Definition</th></tr>
          <tr><td class="gut"></td><td>Send to Solver</td><td>Yes</td></tr>
          <tr><td class="gut"></td><td>Protected</td><td>Program Controlled</td></tr>
          <tr><td class="gut"></td><td>Visible</td><td>Yes</td></tr>
          <tr><td class="gut"></td><td>Program Controlled Inflation</td><td>Exclude</td></tr>
          <tr><td class="gut"><button class="exp" aria-label="Collapse Statistics">−</button></td><th colspan="2">Statistics</th></tr>
          <tr><td class="gut"></td><td>Type</td><td class="ro">Manual</td></tr>
          <tr><td class="gut"></td><td><label><input type="checkbox">Total Selection</label></td><td class="ro">4 Edges</td></tr>
          <tr><td class="gut"></td><td><label><input type="checkbox">Length</label></td><td class="ro">2.0396 m</td></tr>
          <tr><td class="gut"></td><td>Suppressed</td><td class="ro">0</td></tr>
          <tr><td class="gut"></td><td>Used by Mesh Worksheet</td><td class="ro">No</td></tr>
        </tbody>
      </table>
    </section>
  </aside>

  <section class="graphics">
    <div class="gtoolbar">
      <span class="grip-v"></span>
      <div class="tg w2"><button aria-label="Previous view"><svg class="i20"><use href="#zback"/></svg></button><button aria-label="Next view"><svg class="i20"><use href="#zfwd"/></svg></button></div>
      <span class="sep"></span>
      <div class="tg w3"><button class="on" aria-label="Shaded exterior and edges"><svg class="i20"><use href="#cubel"/></svg></button><button aria-label="Shaded exterior"><svg class="i20"><use href="#cubed"/></svg></button><button aria-label="Display"><svg class="i20"><use href="#multi"/></svg></button></div>
      <span class="sep"></span>
      <div class="tg w1"><button aria-label="Arrange"><svg class="i20"><use href="#grid"/></svg></button></div>
      <span class="sep"></span>
      <div class="tg w1"><button aria-label="Rotate"><svg class="i20"><use href="#rotate"/></svg></button></div>
      <span class="caret rot-caret"></span>
      <div class="tg w6"><button aria-label="Pan"><svg class="i20"><use href="#pan"/></svg></button><button aria-label="Zoom"><svg class="i20"><use href="#zud"/></svg></button><button aria-label="Box zoom"><svg class="i20"><use href="#zplus"/></svg></button><button aria-label="Zoom to fit"><svg class="i20"><use href="#zcube"/></svg></button><button aria-label="Zoom to selection"><svg class="i20"><use href="#zgreen"/></svg></button><button aria-label="Magnifier"><svg class="i20"><use href="#zud"/></svg></button></div>
      <span class="sep"></span>
      <span class="tlabel d-select">Select</span>
      <button class="tdrop d-mode"><svg class="i18"><use href="#modeic"/></svg>Mode<span class="caret"></span></button>
      <div class="tg w11"><button class="on" aria-label="Smart select"><svg class="i20"><use href="#quad"/></svg></button><button aria-label="Vertex"><svg class="i20"><use href="#selv"/></svg></button><button aria-label="Edge"><svg class="i20"><use href="#sele"/></svg></button><button aria-label="Face"><svg class="i20"><use href="#self"/></svg></button><button aria-label="Body"><svg class="i20"><use href="#selb"/></svg></button><button aria-label="Node"><svg class="i20"><use href="#seln"/></svg></button><button aria-label="Element face"><svg class="i20"><use href="#selnf"/></svg></button><button aria-label="Element"><svg class="i20"><use href="#seleb"/></svg></button><button aria-label="Coordinates"><svg class="i20"><use href="#xyz"/></svg></button><button aria-label="Probe"><svg class="i20"><use href="#probe"/></svg></button><button aria-label="Label"><svg class="i20"><use href="#note"/></svg></button></div>
      <span class="sep"></span>
      <div class="tg w1"><button aria-label="Chart"><svg class="i20"><use href="#chart"/></svg></button></div>
      <span class="sep"></span>
      <button class="tdrop d-clip"><svg class="i18"><use href="#clip"/></svg>Clipboard<span class="caret"></span></button>
      <span class="tlabel d-empty">[ Empty ]</span>
      <span class="sep"></span>
      <button class="tdrop d-ext"><svg class="i18"><use href="#extend"/></svg>Extend<span class="caret"></span></button>
      <button class="tdrop d-sel"><svg class="i18"><use href="#pin"/></svg>Select By<span class="caret"></span></button>
      <button class="tdrop d-conv"><svg class="i18"><use href="#convert"/></svg>Convert<span class="caret"></span></button>
      <span class="caret white low"></span>
    </div>

    <div class="viewport">
      <svg class="scene" viewBox="557 203 2001 1347" preserveAspectRatio="xMidYMid meet">
        <path d="M2250 309H1211L1126 316 1048 335 971 366 900 409 836 464 782 526 738 598 706 676 687 756 680 840 687 923 706 1003 738 1081 782 1153 836 1215 900 1270 971 1313 1048 1345 1126 1364 1211 1371H2250Z" fill="#7c8a9d" stroke="#9db5d1" stroke-width="2"/>
        <path d="M680 840H2250M1211 308V1371M1294 308V1371" stroke="#9db5d1" stroke-width="2"/>
        <path d="M1188 839C1189 834 1200 833 1214 832C1235 832 1262 836 1295 839C1262 842 1235 846 1214 846C1200 845 1189 844 1188 839Z" fill="#5a5a5a" stroke="#ee3a40" stroke-width="2"/>
        <path d="M1220 819H1248L1253 833 1248 846H1220Z" fill="#ff3234" stroke="#111" stroke-width="2"/>
        <path d="M1073 619H1090M1082 611V627" stroke="#626d70" stroke-width="1"/>
        <g class="scale">
          <path d="M1239 1465h159v25h-159zM1557 1465h160v25h-160z" fill="#000"/>
          <path d="M1238 1465H1876" stroke="#959595" stroke-width="2"/>
          <path d="M1238 1489.500H1875.500V1466" fill="none" stroke="#fff" stroke-width="1"/>
          <text x="1238" y="1457" text-anchor="middle">0.000</text>
          <text x="1556" y="1457" text-anchor="middle">3.000</text>
          <text x="1855" y="1457">6.000 (m)</text>
          <text x="1397" y="1520" text-anchor="middle">1.500</text>
          <text x="1716" y="1520" text-anchor="middle">4.500</text>
        </g>
        <g class="triad">
          <path d="M2407 1317h8v82h-8z" fill="url(#gTop)"/>
          <path d="m2411 1289 11 29q-11 3-23 0z" fill="url(#gTop)"/>
          <path d="M2418 1404h84v8h-84z" fill="url(#gRed)"/>
          <path d="M2500 1397l30 12-30 12z" fill="url(#gRed)"/>
          <circle cx="2410" cy="1409" r="12" fill="#00008b"/>
          <path d="M2410 1409V1397h9l3 12z" fill="#0000f0"/>
          <circle cx="2466" cy="1353" r="12" fill="url(#gCyan)"/>
          <text x="2410" y="1270" fill="#14a014">Y</text>
          <text x="2549" y="1409" fill="#e81010">X</text>
        </g>
      </svg>
      <div class="caption"><strong>airfoil</strong><span>19-04-2025 21:57:32</span>
        <div class="legend"><span class="swatch"></span>airfoil</div>
      </div>
      <div class="brand">
        <div class="brand-name" role="img" aria-label="Ansys"><svg class="brand-mark" viewBox="0 0 40 36"><path d="M13 1h12L11 35H0zM26 1l14 34H29l-8-19z" fill="#fff"/></svg><span>nsys</span></div>
        <div class="brand-rel">2025 R1</div>
      </div>
    </div>

    <nav class="view-tabs"><button class="vt current">Geometry</button><button class="vt">Report Preview</button></nav>
  </section>
</main>

<footer class="statusbar">
  <span class="st messages"><svg class="i20"><use href="#msg"/></svg>4 Messages</span>
  <span class="st selinfo">No Selection</span>
  <span class="st metric"><span class="tri-up"></span><span class="metric-text">Metric (m, kg, N, s, V, A)</span></span>
  <span class="st">Degrees</span>
  <span class="st">rad/s</span>
  <span class="st">Celsius</span>
</footer>
</body>
</html>
```
FILE: styles.css
```css
* { box-sizing: border-box; }

body {
  margin: 0;
  height: 100vh;
  display: flex;
  flex-direction: column;
  overflow: hidden;
  background: #212121;
  color: #dedede;
  font: 14px/18px "Open Sans", "Noto Sans", sans-serif;
}

button, input, select { font: inherit; color: inherit; }
button { background: none; border: 0; padding: 0; white-space: nowrap; }
h1, h2 { margin: 0; font: inherit; }
svg { display: block; flex: none; }

.sprite { position: absolute; width: 0; height: 0; }
.i14 { width: 14px; height: 14px; }
.i14x16 { width: 14px; height: 16px; }
.i18 { width: 18px; height: 18px; }
.i18x12 { width: 18px; height: 12px; }
.i20 { width: 20px; height: 20px; }
.i40 { width: 40px; height: 38px; }

.plain { display: flex; align-items: center; }
.caret {
  flex: none;
  width: 0;
  height: 0;
  border: 4px solid transparent;
  border-top-color: #8f8f8f;
  border-bottom-width: 0;
}
.caret.white { border-top-color: #fff; border-width: 5px 5px 0; }
.big-caret { border-top-color: #fff; border-width: 6px 6px 0; }

/* title bar */
.titlebar {
  height: 33px;
  flex: none;
  display: flex;
  background: #0b3f94;
  border-top: 1px solid #2450a0;
}
.quick-access { width: 154px; padding: 3px 0 0 10px; display: flex; align-items: flex-start; }
.qa-sep { width: 1px; height: 26px; margin: -3px 7px 0 10px; background: #12233f; }
.qa-more { margin: 6px 0 0 7px; }
.context-tab {
  width: 141px;
  margin-bottom: 1px;
  border-top: 4px solid #38599c;
  background: #d5dff2;
  color: #4673b8;
  text-align: center;
  line-height: 27px;
}
.app-title { flex: 1; padding-left: 7px; line-height: 36px; color: #f0f0f0; }
.window-buttons { display: flex; gap: 29px; padding: 8px 12px 0 0; align-items: flex-start; }

/* ribbon tabs */
.tabbar { height: 29px; flex: none; display: flex; background: #0b3f94; border-bottom: 1px solid #1a2c4c; }
.tab { padding-top: 2px; text-align: center; color: #f0f0f0; }
.file { width: 70px; padding-top: 0; background: #2c46d8; }
.home { width: 70px; margin: 0 0 -1px 10px; background: #212121; border: 1px solid #4a4436; border-bottom: 0; color: #fff; }
.t-ns { width: 146px; }
.t-di { width: 82px; }
.t-se { width: 94px; }
.t-au { width: 114px; }
.t-le { width: 176px; }
.tab-tools { margin-left: auto; display: flex; align-items: center; padding-right: 3px; }
.quick-launch {
  width: 200px;
  height: 27px;
  margin-right: 4px;
  padding: 0 3px;
  background: #212121;
  border: 1px solid #4a4a4a;
}
::placeholder { color: #6c6c6c; opacity: 1; }
.help { margin: 0 4px 0 8px; }
.help-dot { width: 19px; height: 19px; border-radius: 50%; background: #3f8fd0; color: #12233f; font-weight: 700; line-height: 19px; }

/* ribbon */
.ribbon { height: 108px; flex: none; display: flex; padding-top: 4px; }
.group { height: 95px; border-right: 1px solid #343434; }
.group-body { display: grid; height: 81px; }
.group-label { line-height: 13px; text-align: center; color: #6e6e6e; }
.g-outline { width: 219px; }
.g-outline .group-body { padding-left: 8px; grid-template-columns: 70px 64px 76px; }
.g-mesh { width: 79px; }
.g-insert { width: 280px; }
.g-insert .group-body { padding-left: 8px; grid-template-columns: 149px 1fr; }
.g-tools { width: 643px; }
.g-tools .group-body { grid-template-columns: 66px 64px 78px 125px 168px 1fr; }
.g-layout { width: 195px; }
.g-layout .group-body { padding-left: 8px; grid-template-columns: 52px 1fr; }
.big {
  display: flex;
  flex-direction: column;
  align-items: center;
  justify-content: flex-start;
  padding-top: 5px;
  line-height: 14px;
}
.big.keyframe { padding-left: 6px; }
.big > span:not(.caret):not(.units-icon) { margin-top: 8px; }
.big .caret { margin-top: 10px; }
.stack { display: grid; grid-template-rows: 27px 27px 27px; justify-items: start; }
.small {
  display: flex;
  align-items: center;
  gap: 1px;
  padding: 0 3px;
  border: 1px solid transparent;
}
.small .caret { margin-bottom: 4px; }
.small.on { padding: 0 2px; border: 2px solid #2e86de; background: #2d2d30; }
.off { color: #5c5c5c; }
.units-icon { display: grid; }
.units-icon > * { grid-area: 1 / 1; }
.units-text { align-self: end; text-align: center; color: #111; font-weight: 700; font-size: 15px; line-height: 20px; }

/* workspace */
.workspace { flex: 1; min-height: 0; display: flex; background: #2a2d33; }
.sidebar { width: 551px; flex: none; display: flex; flex-direction: column; gap: 5px; }
.outline { height: 839px; background: #212121; padding-top: 1px; }
.details { flex: 1; background: #212121; }
.panel-head {
  height: 26px;
  display: flex;
  align-items: center;
  gap: 6px;
  padding: 0 9px 1px 6px;
  background: #2a2d33;
  border-top: 1px solid #3a3d42;
  color: #e8e8e8;
}
.panel-head.active { background: #ff8c00; border-top-color: #ff8c00; }
.grip-h {
  flex: 1;
  height: 9px;
  background: radial-gradient(circle, #85857a 25%, transparent 30%) 0 0 / 4px 4px;
  opacity: .7;
}
.details .grip-h { opacity: .3; }
.grip-v {
  width: 7px;
  height: 24px;
  flex: none;
  background: radial-gradient(circle, #555 30%, transparent 35%) 0 0 / 4px 4px;
}
.outline-tools { height: 66px; background: #2d2d30; }
.tool-row { display: flex; padding-left: 12px; align-items: center; }
.filter-row { height: 32px; }
.select-wrap { position: relative; width: 125px; margin-left: 9px; }
.select-wrap select {
  width: 100%;
  height: 28px;
  padding: 0 3px;
  appearance: none;
  border: 1px solid #3f3f44;
  border-radius: 0;
  background: linear-gradient(90deg, #212121 104px, #333338 104px);
}
.select-wrap .caret { position: absolute; right: 5px; top: 12px; border-width: 5px 5px 0; }
.search {
  width: 112px;
  height: 28px;
  padding: 0 4px;
  margin-right: 5px;
  border: 1px solid #3f3f44;
  background: #212121;
}
.caret.low { margin: 12px 0 0 6px; }
.icon-row { height: 33px; gap: 8px; }
.icon-row .grip-v { margin-right: 4px; }
.icon-row .caret.low { margin-left: -4px; }

/* tree */
.tree { margin: 0; padding: 0; list-style: none; font: 13px/18px "DejaVu Sans Condensed", "DejaVu Sans", sans-serif; color: #f0f0f0; }
.row { height: 20px; display: flex; align-items: center; }
.root { padding-left: 11px; font-weight: 700; }
.root .name { margin-left: 6px; }
.l1 { padding-left: 10px; font-weight: 700; }
.l1 > svg { margin-left: 11px; }
.l1 .name { margin-left: 7px; }
.l2, .l3 { padding-left: 44px; }
.name { padding: 0 1px; }
.l2 .name, .l3 .name { margin-left: 5px; }
.selected { background: #0078d7; outline: 1px dotted #d98a3a; }
.state { width: 11px; height: 13px; margin: 7px 0 0 0; }
.state + svg { margin-right: 1px; }
.guide, .branch { height: 20px; display: flex; align-items: center; }
.guide {
  width: 34px;
  background: repeating-linear-gradient(#a8a8a8 0 1px, transparent 1px 2px) 5px 0 / 1px 100% no-repeat;
}
.guide.none { background: none; }
.branch {
  width: 23px;
  background:
    repeating-linear-gradient(#a8a8a8 0 1px, transparent 1px 2px) 5px 0 / 1px 100% no-repeat,
    repeating-linear-gradient(90deg, #a8a8a8 0 1px, transparent 1px 2px) 6px 10px / 100% 1px no-repeat;
}
.branch.last { background-size: 1px 50%, 100% 1px; }
.exp {
  width: 12px;
  height: 12px;
  border: 1px solid #b8b8b8;
  background: #212121;
  color: #fff;
  font: 12px/9px "DejaVu Sans", sans-serif;
  display: flex;
  align-items: center;
  justify-content: center;
}

/* property grid */
.props { width: 100%; height: 316px; border-collapse: collapse; table-layout: fixed; color: #d2d2d2; line-height: 16px; }
.c-exp { width: 17px; }
.c-key { width: 195px; }
.props td, .props th { border: 1px solid #929292; padding: 0 4px 1px; text-align: left; white-space: nowrap; }
.props th { color: #e8e8e8; font-weight: 700; }
.props .gut { border-width: 0; padding: 0 0 0 2px; }
.props .ro { background: #485a64; }
.props label { display: flex; align-items: center; gap: 5px; }
.props input { appearance: none; width: 15px; height: 15px; margin: 0; background: #fff; border: 1px solid #d0d0d0; }

/* graphics toolbar */
.graphics { flex: 1; min-width: 0; margin-left: 6px; display: flex; flex-direction: column; }
.gtoolbar { height: 34px; flex: none; display: flex; align-items: center; padding-left: 11px; background: #2d2d30; }
.gtoolbar > .grip-v { margin-right: 8px; }
.sep { width: 1px; height: 26px; margin: 0 3px; flex: none; background: #1a1a1a; }
.tg { display: flex; height: 27px; flex: none; }
.tg button { flex: 1; display: flex; align-items: center; justify-content: center; border: 2px solid transparent; }
.tg button.on { border-color: #2e86de; }
.w1 { width: 28px; }
.w2 { width: 56px; }
.w3 { width: 83px; }
.w6 { width: 166px; }
.w11 { width: 302px; }
.rot-caret { margin: 0 4px 0 2px; }
.tlabel { padding-left: 4px; }
.tdrop { display: flex; align-items: center; gap: 4px; }
.tdrop .caret { margin-left: -2px; }
.d-select { width: 51px; }
.d-mode { width: 82px; }
.d-clip { width: 107px; margin-left: 6px; }
.d-empty { width: 69px; }
.d-ext { width: 90px; margin-left: 5px; }
.d-sel { width: 105px; }
.d-conv { width: 90px; gap: 3px; }

/* viewport */
.viewport {
  position: relative;
  flex: 1;
  min-height: 0;
  background: radial-gradient(ellipse 60% 60% at center, #5a5a5a, #363636 75%, #212121);
}
.scene { width: 100%; height: 100%; font-size: 15px; }
.scale { fill: #e0e0e0; }
.caption { position: absolute; left: 19px; top: 19px; display: flex; flex-direction: column; font-size: 15px; line-height: 21px; }
.caption strong { color: #fff; }
.legend { display: flex; align-items: center; gap: 7px; margin-top: 21px; }
.swatch { width: 23px; height: 23px; background: #ff3234; border: 1px solid #e8c0c0; }
.brand { position: absolute; right: 7px; top: 19px; color: #fff; text-align: right; }
.brand-name { display: flex; align-items: flex-end; font: 900 48px/54px Lato, "Open Sans", sans-serif; }
.brand-mark { width: 40px; height: 36px; margin-bottom: 9px; }
.brand-rel { font: 700 20px/24px Inter, "Open Sans", sans-serif; }

.view-tabs { height: 24px; flex: none; display: flex; border-top: 1px solid #3a3d42; background: #2a2d33; }
.vt { padding: 0 8px 2px; }
.current { width: 79px; padding-left: 6px; background: #21241f; color: #0a93e8; border-right: 1px solid #3a3d42; }

/* status bar */
.statusbar { height: 24px; flex: none; display: flex; justify-content: flex-end; align-items: center; gap: 15px; padding: 1px 8px 0 0; background: #404040; color: #ececec; }
.st { display: flex; align-items: center; gap: 2px; white-space: nowrap; }
.messages, .selinfo { margin-right: 8px; }
.metric { gap: 8px; margin-left: 4px; }
.metric-text { min-width: 160px; }
.tri-up { border: 5px solid transparent; border-bottom: 6px solid #fff; border-top: 0; }
```
